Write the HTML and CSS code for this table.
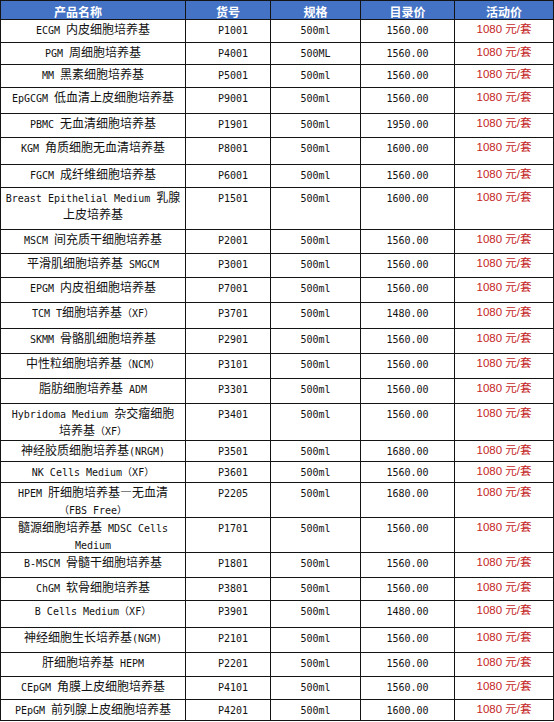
FILE: index.html
```html
<!DOCTYPE html>
<html lang="zh-CN">
<head>
<meta charset="utf-8">
<title>产品价格表</title>
<link rel="stylesheet" href="styles.css">
</head>
<body>
<table class="price-table">
  <colgroup>
    <col class="c-name"><col class="c-code"><col class="c-spec"><col class="c-list"><col class="c-sale">
  </colgroup>
  <thead>
    <tr class="h19">
      <th class="th-name">产品名称</th><th>货号</th><th>规格</th><th>目录价</th><th>活动价</th>
    </tr>
  </thead>
  <tbody>
    <tr class="h23"><td class="name"><span class="en">ECGM </span>内皮细胞培养基</td><td class="code">P1001</td><td>500ml</td><td>1560.00</td><td class="sale">1080 元/套</td></tr>
    <tr class="h22"><td class="name"><span class="en">PGM </span>周细胞培养基</td><td class="code">P4001</td><td>500ML</td><td>1560.00</td><td class="sale">1080 元/套</td></tr>
    <tr class="h23"><td class="name"><span class="en">MM </span>黑素细胞培养基</td><td class="code">P5001</td><td>500ml</td><td>1560.00</td><td class="sale">1080 元/套</td></tr>
    <tr class="h26"><td class="name"><span class="en">EpGCGM </span>低血清上皮细胞培养基</td><td class="code">P9001</td><td>500ml</td><td>1560.00</td><td class="sale">1080 元/套</td></tr>
    <tr class="h24"><td class="name"><span class="en">PBMC </span>无血清细胞培养基</td><td class="code">P1901</td><td>500ml</td><td>1950.00</td><td class="sale">1080 元/套</td></tr>
    <tr class="h27"><td class="name"><span class="en">KGM </span>角质细胞无血清培养基</td><td class="code">P8001</td><td>500ml</td><td>1600.00</td><td class="sale">1080 元/套</td></tr>
    <tr class="h23"><td class="name"><span class="en">FGCM </span>成纤维细胞培养基</td><td class="code">P6001</td><td>500ml</td><td>1560.00</td><td class="sale">1080 元/套</td></tr>
    <tr class="h42"><td class="name"><span class="en">Breast Epithelial Medium </span>乳腺<br>上皮培养基</td><td class="code">P1501</td><td>500ml</td><td>1600.00</td><td class="sale">1080 元/套</td></tr>
    <tr class="h24"><td class="name"><span class="en">MSCM </span>间充质干细胞培养基</td><td class="code">P2001</td><td>500ml</td><td>1560.00</td><td class="sale">1080 元/套</td></tr>
    <tr class="h24"><td class="name">平滑肌细胞培养基<span class="en"> SMGCM</span></td><td class="code">P3001</td><td>500ml</td><td>1560.00</td><td class="sale">1080 元/套</td></tr>
    <tr class="h25"><td class="name"><span class="en">EPGM </span>内皮祖细胞培养基</td><td class="code">P7001</td><td>500ml</td><td>1560.00</td><td class="sale">1080 元/套</td></tr>
    <tr class="h26"><td class="name"><span class="en">TCM T</span>细胞培养基<span class="en">（XF）</span></td><td class="code">P3701</td><td>500ml</td><td>1480.00</td><td class="sale">1080 元/套</td></tr>
    <tr class="h25"><td class="name"><span class="en">SKMM </span>骨骼肌细胞培养基</td><td class="code">P2901</td><td>500ml</td><td>1560.00</td><td class="sale">1080 元/套</td></tr>
    <tr class="h25"><td class="name">中性粒细胞培养基<span class="en">（NCM）</span></td><td class="code">P3101</td><td>500ml</td><td>1560.00</td><td class="sale">1080 元/套</td></tr>
    <tr class="h25"><td class="name">脂肪细胞培养基<span class="en"> ADM</span></td><td class="code">P3301</td><td>500ml</td><td>1560.00</td><td class="sale">1080 元/套</td></tr>
    <tr class="h37"><td class="name"><span class="en">Hybridoma Medium </span>杂交瘤细胞<br>培养基<span class="en">（XF）</span></td><td class="code">P3401</td><td>500ml</td><td>1560.00</td><td class="sale">1080 元/套</td></tr>
    <tr class="h21"><td class="name">神经胶质细胞培养基<span class="en">(NRGM)</span></td><td class="code">P3501</td><td>500ml</td><td>1680.00</td><td class="sale">1080 元/套</td></tr>
    <tr class="h21"><td class="name"><span class="en">NK Cells Medium（XF）</span></td><td class="code">P3601</td><td>500ml</td><td>1560.00</td><td class="sale">1080 元/套</td></tr>
    <tr class="h35"><td class="name"><span class="en">HPEM </span>肝细胞培养基—无血清<br><span class="en">（FBS Free）</span></td><td class="code">P2205</td><td>500ml</td><td>1680.00</td><td class="sale">1080 元/套</td></tr>
    <tr class="h35"><td class="name">髓源细胞培养基<span class="en"> MDSC Cells<br>Medium</span></td><td class="code">P1701</td><td>500ml</td><td>1560.00</td><td class="sale">1080 元/套</td></tr>
    <tr class="h25"><td class="name"><span class="en">B-MSCM </span>骨髓干细胞培养基</td><td class="code">P1801</td><td>500ml</td><td>1560.00</td><td class="sale">1080 元/套</td></tr>
    <tr class="h23"><td class="name"><span class="en">ChGM </span>软骨细胞培养基</td><td class="code">P3801</td><td>500ml</td><td>1560.00</td><td class="sale">1080 元/套</td></tr>
    <tr class="h27"><td class="name"><span class="en">B Cells Medium（XF）</span></td><td class="code">P3901</td><td>500ml</td><td>1480.00</td><td class="sale">1080 元/套</td></tr>
    <tr class="h25"><td class="name">神经细胞生长培养基<span class="en">(NGM)</span></td><td class="code">P2101</td><td>500ml</td><td>1560.00</td><td class="sale">1080 元/套</td></tr>
    <tr class="h24"><td class="name">肝细胞培养基<span class="en"> HEPM</span></td><td class="code">P2201</td><td>500ml</td><td>1560.00</td><td class="sale">1080 元/套</td></tr>
    <tr class="h23"><td class="name"><span class="en">CEpGM </span>角膜上皮细胞培养基</td><td class="code">P4101</td><td>500ml</td><td>1560.00</td><td class="sale">1080 元/套</td></tr>
    <tr class="h21"><td class="name"><span class="en">PEpGM </span>前列腺上皮细胞培养基</td><td class="code">P4201</td><td>500ml</td><td>1600.00</td><td class="sale">1080 元/套</td></tr>
  </tbody>
</table>
</body>
</html>
```

FILE: styles.css
```css
html, body {
  margin: 0;
  padding: 0;
  background: #ffffff;
}

.price-table {
  border-collapse: collapse;
  table-layout: fixed;
  width: 553px;
  font-family: "DejaVu Sans Mono", "Noto Sans CJK SC", monospace;
  font-size: 10px;
  color: #111111;
}

.c-name { width: 185px; }
.c-code { width: 85px; }
.c-spec { width: 90px; }
.c-list { width: 94px; }
.c-sale { width: 99px; }

.price-table th,
.price-table td {
  border: 1px solid #141414;
  padding: 0;
  text-align: center;
}

.price-table th {
  background: #4472c4;
  color: #ffffff;
  font-family: "Noto Sans CJK SC", sans-serif;
  font-weight: 700;
  font-size: 12px;
  line-height: 15px;
  padding-top: 2px;
  vertical-align: middle;
}

.price-table th.th-name {
  padding-right: 30px;
}

.price-table td {
  vertical-align: top;
  line-height: 17px;
  padding-top: 2px;
}

.price-table td.name {
  padding-top: 0;
  padding-left: 3px;
  padding-right: 3px;
  font-family: "Noto Sans CJK SC", sans-serif;
  font-size: 12px;
}

.price-table td.name .en {
  font-family: "DejaVu Sans Mono", "Noto Sans CJK SC", monospace;
  font-size: 10px;
  line-height: 1;
}

.price-table td.code {
  text-align: left;
  padding-left: 32px;
}

.price-table td.sale {
  padding-top: 1px;
  font-family: "Liberation Sans", "Noto Sans CJK SC", sans-serif;
  font-size: 11.5px;
  line-height: 17px;
  color: #c41e24;
}

.h19 { height: 19px; }
.h21 { height: 21px; }
.h22 { height: 22px; }
.h23 { height: 23px; }
.h24 { height: 24px; }
.h25 { height: 25px; }
.h26 { height: 26px; }
.h27 { height: 27px; }
.h35 { height: 35px; }
.h37 { height: 37px; }
.h42 { height: 42px; }
```
